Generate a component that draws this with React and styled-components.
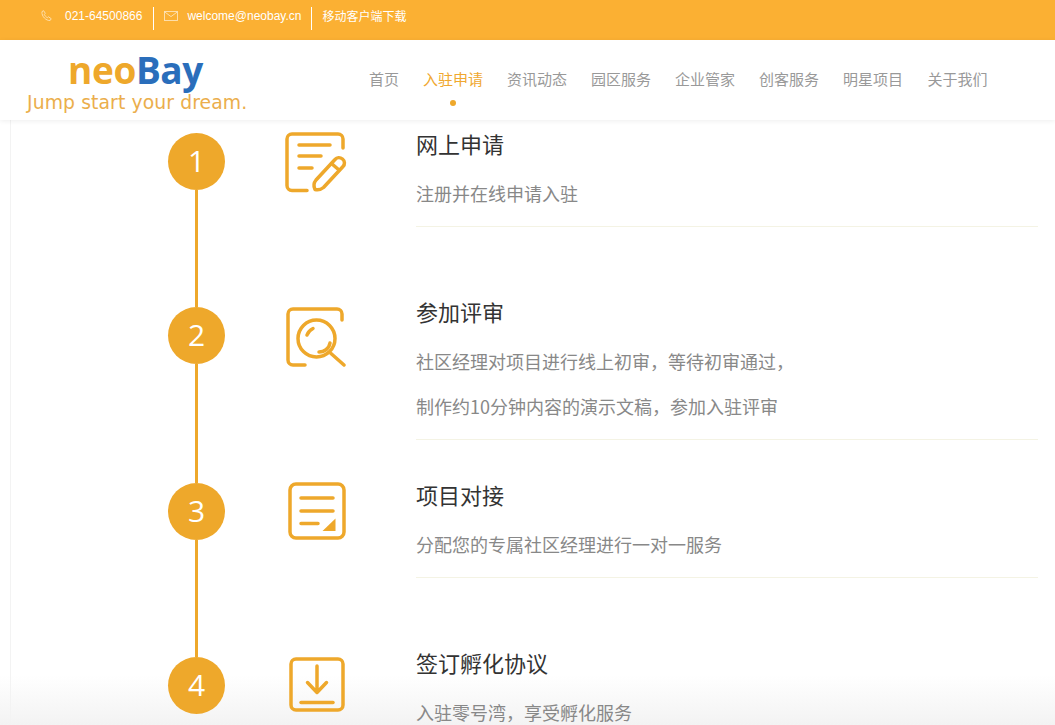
import React from 'react';
import styled, { createGlobalStyle } from 'styled-components';

const ORANGE = '#eea82b';
const CJK = '"Noto Sans CJK SC", "Liberation Sans", sans-serif';

const GlobalStyle = createGlobalStyle`
  html, body {
    margin: 0;
    height: 100%;
    overflow: hidden;
    background: #fff;
  }
  * { box-sizing: border-box; }
`;

const Page = styled.div`
  width: 1055px;
  height: 725px;
  overflow: hidden;
  font-family: ${CJK};
  background: linear-gradient(#fff 675px, #f3f3f3 725px);
`;

const TopBar = styled.div`
  display: flex;
  align-items: flex-start;
  height: 40px;
  padding: 7px 0 0 41px;
  background: #fbb033;
  color: #fff;
  font-size: 12px;
`;

const TopItem = styled.div`
  display: flex;
  align-items: center;
  height: 23px;
  padding-bottom: 6px;
  padding-right: ${p => p.$padRight}px;
  margin-right: 10px;
  font-family: "Liberation Sans", ${CJK};
  border-right: ${p => (p.$last ? 'none' : '1px solid #fff')};

  svg { margin-right: ${p => p.$iconGap}px; flex: none; }
`;

const Header = styled.header`
  position: relative;
  z-index: 1;
  display: flex;
  height: 80px;
  background: #fff;
  box-shadow: 0 1px 5px rgba(0, 0, 0, 0.07);
`;

const Logo = styled.div`
  width: 369px;
  padding: 7px 0 0 27px;
  flex: none;
`;

const LogoName = styled.div`
  padding-left: 41px;
  height: 45px;
  font-family: "Open Sans", sans-serif;
  font-size: 37px;
  font-weight: 700;
  line-height: 45px;
  letter-spacing: -0.4px;
  color: ${ORANGE};

  span { color: #2a6ebb; }
`;

const LogoTag = styled.div`
  font-family: "DejaVu Sans", sans-serif;
  font-size: 18.8px;
  line-height: 22px;
  letter-spacing: 0.1px;
  color: #ebae4c;
  white-space: nowrap;
`;

const Nav = styled.nav`
  display: flex;
  gap: 25px;
  padding-top: 28px;
`;

const NavItem = styled.a`
  position: relative;
  width: ${p => p.$w}px;
  font-size: 15px;
  line-height: 22px;
  white-space: nowrap;
  color: ${p => (p.$active ? '#f0a830' : '#999')};

  &::after {
    content: '';
    display: ${p => (p.$active ? 'block' : 'none')};
    position: absolute;
    left: 27px;
    top: 32px;
    width: 6px;
    height: 6px;
    border-radius: 50%;
    background: ${ORANGE};
  }
`;

const Content = styled.main`
  height: 605px;
  margin-left: 10px;
  padding: 13px 17px 0 157px;
  border-left: 1px solid #f3f3f3;
`;

const Step = styled.section`
  display: flex;
  height: ${p => p.$height}px;
`;

const Rail = styled.div`
  display: flex;
  flex-direction: column;
  align-items: center;
  width: 57px;
  flex: none;
`;

const Circle = styled.div`
  display: flex;
  align-items: center;
  justify-content: center;
  width: 57px;
  height: 57px;
  flex: none;
  padding-bottom: 2px;
  border-radius: 50%;
  background: ${ORANGE};
  color: #fff;
  font-family: "Open Sans", sans-serif;
  font-size: 30px;
`;

const Line = styled.div`
  width: 3px;
  flex: 1;
  background: ${ORANGE};
`;

const IconCell = styled.div`
  width: 191px;
  flex: none;
  margin-top: ${p => p.$top}px;
  padding-left: ${p => p.$left}px;

  svg { display: block; }
`;

const Body = styled.div`
  flex: 1;
  min-width: 0;
  margin-top: ${p => p.$top}px;
`;

const Title = styled.h3`
  margin: 0;
  height: 26px;
  font-size: 22px;
  font-weight: 400;
  line-height: 26px;
  color: #333;
`;

const Descriptions = styled.div`
  margin-top: 15px;
  padding-bottom: 10px;
  border-bottom: 1px solid #f4f3e4;
`;

const Description = styled.p`
  margin: 0;
  font-size: 18px;
  line-height: 45px;
  color: #888;
`;

const PhoneIcon = () => (
  <svg width="12" height="12" viewBox="0 0 12 12" fill="none" stroke="#fde3b8" strokeWidth="0.9">
    <path d="M1 1.600 2.600.7l1.700 2.600-1 1c.5 1.400 1.500 2.600 3.100 3.400l1.100-.9 2.700 1.900-1 1.700C5.500 11.200.2 6.200 1 1.600Z" />
  </svg>
);

const MailIcon = () => (
  <svg width="14" height="10" viewBox="0 0 14 10" fill="none" stroke="#fde3b8" strokeWidth="0.9">
    <rect x="0.5" y="0.5" width="13" height="9" />
    <path d="M.5.8 7 5.600 13.500.8" />
  </svg>
);

const ApplyIcon = () => (
  <svg width="63" height="61" viewBox="0 0 63 61" fill="none" stroke={ORANGE} strokeWidth="3.5" strokeLinecap="round" strokeLinejoin="round">
    <path d="M22 58.500H7a5 5 0 0 1-5-5V7a5 5 0 0 1 5-5h46a5 5 0 0 1 5 5v9" />
    <path d="M14 13h31M14 24h22M14 36h13" />
    <path d="M30 57.500c-1.500-3-1-7 1-9.500L50 27.500c2-2.300 5-2.500 7.500-.5s2.500 5.500.5 7.500L38.500 55.500c-2.500 2-5.500 2.800-8.500 2Z" />
    <path d="M46.500 31.500l7.500 6.500" />
  </svg>
);

const ReviewIcon = () => (
  <svg width="60" height="61" viewBox="0 0 60 61" fill="none" stroke={ORANGE} strokeWidth="3.5" strokeLinecap="round" strokeLinejoin="round">
    <path d="M19 58H7a5 5 0 0 1-5-5V7a5 5 0 0 1 5-5h44a5 5 0 0 1 5 5v6" />
    <circle cx="30.500" cy="31.500" r="18.500" />
    <path d="M45 46.500 58 58" />
    <path d="M21 28c1-3 3-5 6-6.500" />
    <path d="M33 45c5 0 10-3 11-9" />
  </svg>
);

const DocketIcon = () => (
  <svg width="58" height="58" viewBox="0 0 58 58" fill="none" stroke={ORANGE} strokeWidth="3.5" strokeLinecap="round" strokeLinejoin="round">
    <rect x="2" y="2" width="54" height="54" rx="6" />
    <path d="M13 16h32M13 29h32M13 41.500h17" />
    <path d="M47.500 36.500V49h-13Z" fill={ORANGE} stroke="none" />
  </svg>
);

const DownloadIcon = () => (
  <svg width="56" height="55" viewBox="0 0 56 55" fill="none" stroke={ORANGE} strokeWidth="3.5" strokeLinecap="round" strokeLinejoin="round">
    <rect x="2" y="2" width="52" height="51" rx="5" />
    <path d="M28 9v26M18.500 25.500 28 35.500l9.500-10" />
    <path d="M12 45.500h32" />
  </svg>
);

const navItems = [
  { label: '首页', w: 29 },
  { label: '入驻申请', w: 59, active: true },
  { label: '资讯动态', w: 59 },
  { label: '园区服务', w: 59 },
  { label: '企业管家', w: 59 },
  { label: '创客服务', w: 59 },
  { label: '明星项目', w: 59.500 },
  { label: '关于我们', w: 59 },
];

const steps = [
  { n: 1, height: 174, bodyTop: -3, iconTop: -1, iconLeft: 60, Icon: ApplyIcon, title: '网上申请', lines: ['注册并在线申请入驻'] },
  { n: 2, height: 176, bodyTop: -9, iconTop: 0, iconLeft: 61, Icon: ReviewIcon, title: '参加评审', lines: ['社区经理对项目进行线上初审，等待初审通过，', '制作约10分钟内容的演示文稿，参加入驻评审'] },
  { n: 3, height: 174, bodyTop: -2, iconTop: -1, iconLeft: 63, Icon: DocketIcon, title: '项目对接', lines: ['分配您的专属社区经理进行一对一服务'] },
  { n: 4, height: 100, bodyTop: -8, iconTop: 0, iconLeft: 64, Icon: DownloadIcon, title: '签订孵化协议', lines: ['入驻零号湾，享受孵化服务'] },
];

export default function App() {
  return (
    <Page>
      <GlobalStyle />
      <TopBar>
        <TopItem $iconGap={12} $padRight={11}><PhoneIcon />021-64500866</TopItem>
        <TopItem $iconGap={9} $padRight={10}><MailIcon />welcome@neobay.cn</TopItem>
        <TopItem $last>移动客户端下载</TopItem>
      </TopBar>
      <Header>
        <Logo>
          <LogoName>neo<span>Bay</span></LogoName>
          <LogoTag>Jump start your dream.</LogoTag>
        </Logo>
        <Nav>
          {navItems.map(item => (
            <NavItem key={item.label} $w={item.w} $active={item.active}>{item.label}</NavItem>
          ))}
        </Nav>
      </Header>
      <Content>
        {steps.map((step, idx) => (
          <Step key={step.n} $height={step.height}>
            <Rail>
              <Circle>{step.n}</Circle>
              {idx < steps.length - 1 && <Line />}
            </Rail>
            <IconCell $top={step.iconTop} $left={step.iconLeft}><step.Icon /></IconCell>
            <Body $top={step.bodyTop}>
              <Title>{step.title}</Title>
              <Descriptions>
                {step.lines.map(line => <Description key={line}>{line}</Description>)}
              </Descriptions>
            </Body>
          </Step>
        ))}
      </Content>
    </Page>
  );
}
